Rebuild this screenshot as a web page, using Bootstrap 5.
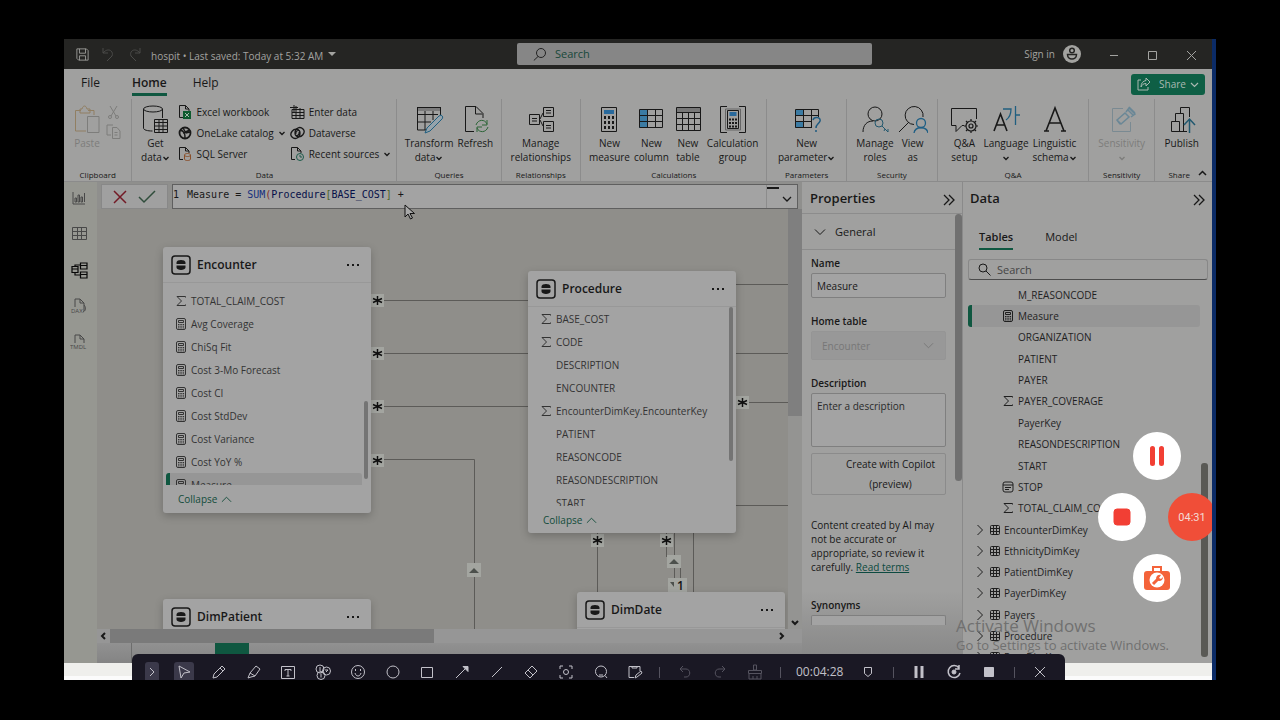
<!DOCTYPE html>
<html lang="en">
<head>
<meta charset="utf-8">
<meta name="viewport" content="width=device-width, initial-scale=1">
<title>hospit - Model view</title>
<link href="https://cdn.jsdelivr.net/npm/bootstrap@5.3.0/dist/css/bootstrap.min.css" rel="stylesheet">
<style>
:root{--ink:#181818;--soft:#333;--panel:#a0a09f;--sheet:#a3a3a3;--line:#858585;--green:#0f5740}
body{background:#000;color:var(--ink);font-family:"Open Sans","Noto Sans",sans-serif;font-size:10px;line-height:14px;height:100vh;padding:39px 64px 40px;overflow:hidden}
svg{flex:none;fill:none;stroke:currentColor;stroke-width:1}
button,input,select,textarea{font:inherit;color:inherit}
.plain{background:none;border:0;padding:0;color:inherit}
.screen{background:var(--panel);border-right:4px solid #0b2b66;overflow:hidden}
.titlebar{height:30px;background:#252523;color:#a3a3a0;flex:none}
.title-search{width:355px;height:22px;left:453px;top:4px;background:#868686;border-radius:2px}
.title-search input,.find input{background:none;border:0;outline:0;font-size:11px;padding:0;min-width:0}
.title-search input::placeholder{color:#17483a;opacity:1}
.find input::placeholder{color:#444;opacity:1}
.window-buttons{gap:28px;padding-right:15px}
.tabs{height:30px;flex:none;padding:0 7px 0 17px;font-size:12px}
.tabs .tab{line-height:20px;height:24px;border-bottom:3px solid transparent}
.tabs .tab.on{font-weight:600;border-color:var(--green);margin:0 26px 0 32px}
.share{background:#0e5f45;color:#aab9b2;width:74px;height:21px;border-radius:3px;font-size:10px}
.ribbon{height:83px;flex:none;border-bottom:1px solid #8b8b8b}
.group{border-right:1px solid #8c8c8c;padding-top:6px;min-width:0}
.group:last-child{border:0}
.group-name{font-size:8px;line-height:12px}
.big{text-align:center;white-space:nowrap;min-width:30px}
.big svg{display:block;margin:0 auto 1px}
.small-cmds{margin-top:-4px}
.small-cmd{height:21px;white-space:nowrap}
.faded{color:#7d7d7b}
.g1{flex:68 1 0}.g2{flex:266 1 0}.g3{flex:104 1 0}.g4{flex:79 1 0}.g5{flex:187 1 0}.g6{flex:79 1 0}.g7{flex:91 1 0}.g8{flex:151 1 0}.g9{flex:66 1 0}.g10{flex:57 1 0}
.rail{width:33px;flex:none;background:#969791;color:#484848;padding:8px 3px 0 0}
.rail button{height:16px;margin-bottom:20px}
.formula{height:27px;padding:2px 4px 0;background:#8f8f8d}
.formula-tools{width:67px;border:1px solid #888;background:#a0a0a0;gap:11px}
.formula-text{border:1px solid #5f5f5f;background:#a3a3a3;font:10px/20px "DejaVu Sans Mono","Liberation Mono",monospace}
.formula-more{width:31px;border-left:1px solid #8c8c8c}
.fn{color:#17307e}.paren{color:#802b2b}.ref{color:#061048}.bracket{color:#4e6527}
.canvas{background:#8f8e8a;overflow:hidden}
.wires{left:0;top:0;color:#5c5b58}
.wires .tag{fill:#a3a5a0;stroke:none}
.wires .ink{stroke:#111;stroke-width:2}
.wires .tri{fill:#4c504c;stroke:none}
.wires text{font-size:12px;font-weight:600;fill:#111;stroke:none}
.node{width:208px;background:var(--sheet);border-radius:3px;box-shadow:0 3px 8px rgba(0,0,0,.22);overflow:hidden}
.node-head{height:36px;border-bottom:1px solid #989898;padding:0 12px 0 8px;font-size:12px;font-weight:600;gap:6px}
.node-encounter{left:66px;top:38px;height:266px}
.node-procedure{left:431px;top:62px;height:262px}
.node-patient{left:66px;top:390px;height:60px}
.node-date{left:480px;top:383px;height:60px}
.fields{margin:0;padding:0;list-style:none;overflow:hidden;color:var(--soft)}
.node .fields li{height:23px;padding-left:12px;display:flex;align-items:center;gap:4px}
.node-encounter .fields{height:196px;margin-top:6px;padding:0 9px 0 0}
.node-procedure .fields{height:199px}
.fields svg,.slot{width:12px;height:12px;flex:none}
.fields .chosen{background:#969696;border-left:4px solid var(--green);border-radius:3px}
.node .fields .chosen{margin-left:3px;padding-left:5px}
.collapse-link{color:#124c3a;margin-left:15px;height:28px}
.thumb{background:#747474;border-radius:2px;width:4px}
.t1{right:3px;top:154px;height:78px}
.t2{right:3px;top:36px;height:154px}
.vbar{width:14px;background:#949492}
.vbar .slab{height:207px;background:#7f7f7f}
.hbar{height:14px;background:#969696;flex:none}
.hbar .slab{flex:0 0 46%;background:#7a7a7a}
.pages{height:20px;flex:none;background:linear-gradient(#919191,#848484)}
.pages .nav-space{width:35px;border-right:1px solid #6d6d6d}
.pages .add{width:34px;height:12px;margin-left:83px;background:#0f5740}
.props{width:161px;flex:none;border-right:1px solid #8a8a8a;background:linear-gradient(#a0a09f 85%,#868686)}
.pane-title{font-size:13px;font-weight:600;line-height:18px;height:31px;padding:7px 6px 0 8px}
.rule{border-top:1px solid #8c8c8c}
.section-toggle{height:36px;font-size:11px;padding-left:12px;gap:9px}
.form-part{margin:0 16px 0 9px;padding-top:6px}
.form-part label{display:block;font-weight:600;line-height:14px;margin:16px 0 3px}
.form-part label:first-child{margin-top:0}
.box{display:block;width:100%;border:1px solid #7f7f7f;border-radius:2px;background:#a3a3a3;padding:0 5px}
.box::placeholder{color:#2a2a2a;opacity:1}
.name-box{height:25px}
.home-box{height:29px;padding-left:10px;appearance:none;background:#989898;border-color:#959595;color:#777;opacity:1}
.home-mark{right:12px;top:9px;color:#777}
.desc-box{height:54px;padding-top:5px;resize:none}
.copilot{height:42px;margin-top:6px;line-height:20px;padding:0 0 0 24px;background:none;border-color:#8b8b8b}
.note{margin:23px 0 0}
.note a{color:#0c4a40}
.form-part .syn-label{margin-top:24px}
.syn-box{height:10px;border-bottom:0;border-radius:2px 2px 0 0}
.props-thumb{right:0;top:32px;width:7px;height:267px;border-radius:4px;background:#707070}
.data{width:249px;flex:none;padding:0 4px 0 5px}
.data .pane-title{padding:7px 2px 0}
.data-tabs{height:20px;font-size:11px;padding-left:11px;gap:32px;margin-top:17px}
.data-tabs button{padding-bottom:4px}
.data-tabs .on{font-weight:600;border-bottom:2px solid var(--green)}
.find{height:21px;border:1px solid #888;border-bottom-color:#4c4c4c;border-radius:3px;margin-top:9px;padding-left:9px;gap:6px}
.tree{display:grid;grid-auto-rows:1fr;color:#1f1f1f;margin:4px 8px 0 0;padding:0;list-style:none}
.tree li{display:flex;align-items:center;gap:4px;padding-left:34px}
.tree .chosen{padding-left:30px}
.tree-fields{height:235px}
.tree-tables{height:149px;margin-top:0}
.tree-tables li{padding-left:6px;gap:3px}
.data-thumb{right:4px;top:281px;width:7px;height:194px;background:#595955;border-radius:3px}
.desk{height:17px;flex:none;background:#efefec;border-bottom:4px solid #fbfbfb}
.watermark{left:892px;top:576px;color:#707070;pointer-events:none;font-size:13px;line-height:17px}
.watermark strong{display:block;font-size:17px;font-weight:400;line-height:22px}
.recorder{left:68px;right:147px;bottom:0;height:26px;background:#1a1824;border-radius:6px 6px 0 0;color:#c2c1c9;overflow:hidden;padding:10px 0 0 13px}
.recorder button{height:20px;width:20px;display:flex;justify-content:center;align-items:center}
.recorder .fold{width:14px}
.recorder .lit{background:#3b394a;border-radius:3px}
.recorder .off{color:#55535f}
.recorder .bar{width:1px;height:11px;background:#55535f}
.tools{width:486px;justify-content:space-around;margin:0 6px 0 8px}
.tail{gap:15px}
.clock{font-size:12px;line-height:20px}
.round{width:48px;height:48px;border-radius:50%;background:#fff;border:0;padding:0;display:flex;align-items:center;justify-content:center;color:#f23f34}
.r1{right:31px;top:393px}.r2{right:66px;top:454px}.r3{right:-4px;top:454px;background:#f04e38;color:#f4dcd6;font:11px Roboto,sans-serif}.r4{right:31px;top:515px;color:#f4633a}
.pointer{left:340px;top:165px}
</style>
</head>
<body>
<svg width="0" height="0" class="position-absolute" aria-hidden="true">
<symbol id="calc" viewBox="0 0 12 12"><rect x="1.5" y=".5" width="9" height="11" rx="1.5"/><path d="M3.5 2.5h5v2h-5zM3 6.5h1.5M5.3 6.5h1.5M7.6 6.5h1.5M3 8.2h1.5M5.3 8.2h1.5M7.6 8.2h1.5M3 9.9h1.5M5.3 9.9h1.5M7.6 9.9h1.5"/></symbol>
<symbol id="sum" viewBox="0 0 12 12"><path d="M10.500 2.500V1.500H2L6.500 6 2 10.500h8.500V9.500"/></symbol>
<symbol id="chev" viewBox="0 0 8 8"><path d="M1.500 3 4 5.500 6.500 3" stroke-width="1.300"/></symbol>
<symbol id="down" viewBox="0 0 12 12"><path d="M1 3.500l5 5 5-5"/></symbol>
<symbol id="up" viewBox="0 0 12 12"><path d="M1 8.500l5-5 5 5"/></symbol>
<symbol id="right" viewBox="0 0 8 12"><path d="M1.500 1l5 5-5 5"/></symbol>
<symbol id="dbl" viewBox="0 0 14 14"><path d="M2 2l5 5-5 5M7 2l5 5-5 5" stroke-width="1.300"/></symbol>
<symbol id="tbl" viewBox="0 0 12 12"><rect x="1.500" y="1.500" width="9" height="9" rx="1"/><path d="M4.500 1v10M7.500 1v10M1 4.500h10M1 7.500h10"/></symbol>
<symbol id="date" viewBox="0 0 12 12"><rect x="1" y="1" width="10" height="10" rx="2"/><path d="M1 4h10M3 6.500h6M3 8.500h4"/></symbol>
<symbol id="db" viewBox="0 0 20 20"><rect x="1" y="1" width="18" height="18" rx="3" stroke-width="1.500"/><path d="M5.500 7.500c0-3.300 9-3.300 9 0v1.500h-9zM5.500 10.500h9v2c0 3.300-9 3.300-9 0z" fill="currentColor" stroke="none"/></symbol>
<symbol id="dots" viewBox="0 0 12 4"><path d="M0 1h2v2H0zM5 1h2v2H5zM10 1h2v2h-2z" fill="currentColor" stroke="none"/></symbol>
<symbol id="glass" viewBox="0 0 14 14"><circle cx="8" cy="6" r="4.500"/><path d="M5 9.500.8 13.500"/></symbol>
<symbol id="doc" viewBox="0 0 14 14"><path d="M5 12.500H1.500V.5h6L11 4v2M7.500.5V4H11"/></symbol>
</svg>

<div class="screen d-flex flex-column h-100 position-relative">
<header class="titlebar d-flex align-items-center position-relative">
 <button class="plain ms-2 ps-1" aria-label="Save"><svg width="13" height="15" viewBox="0 0 15 15"><path d="M1 1h11l2 2v11H3l-2-2zM4 1v5h7V1M4 14V9h7v5"/></svg></button>
 <button class="plain ms-2 ps-1" aria-label="Undo"><svg width="15" height="15" viewBox="0 0 15 15" color="#4b4b49"><path d="M2 1v5h5M2 6c5-6 11-2 9 3l-5 5"/></svg></button>
 <button class="plain ms-2 ps-1" aria-label="Redo"><svg width="15" height="15" viewBox="0 0 15 15" color="#4b4b49"><path d="M12 1v5H7M12 6C7 0 1 4 3 9l5 5"/></svg></button>
 <span class="ms-2 pt-1">hospit • Last saved: Today at 5:32 AM</span>
 <svg class="ms-1" width="10" height="8" viewBox="0 0 10 8"><path d="M1 2h8L5 6z" fill="currentColor" stroke="none"/></svg>
 <label class="title-search position-absolute d-flex align-items-center ps-3 gap-2"><svg width="14" height="14" color="#222"><use href="#glass"/></svg><input placeholder="Search" aria-label="Search"></label>
 <div class="window-buttons ms-auto d-flex align-items-center">
  <div class="d-flex align-items-center gap-2"><a href="#" class="text-reset text-decoration-none">Sign in</a>
  <svg width="18" height="18" viewBox="0 0 18 18"><circle cx="9" cy="9" r="9" fill="currentColor" stroke="none"/><g stroke="#252523" stroke-width="1.500"><circle cx="9" cy="5.500" r="2.300"/><path d="M4.500 9.500h9c0 6-9 6-9 0z"/></g></svg></div>
  <button class="plain" aria-label="Minimize"><svg width="10" height="10"><path d="M1 5.500h8"/></svg></button>
  <button class="plain" aria-label="Maximize"><svg width="11" height="10"><path d="M1.500 1.500h8v8h-8z"/></svg></button>
  <button class="plain" aria-label="Close"><svg width="11" height="11"><path d="M1 1l9 9M10 1l-9 9"/></svg></button>
 </div>
</header>

<nav class="tabs d-flex align-items-center">
 <button class="plain tab">File</button><button class="plain tab on">Home</button><button class="plain tab">Help</button>
 <button class="plain share ms-auto d-flex align-items-center justify-content-center gap-1"><svg width="14" height="14" viewBox="0 0 14 14"><path d="M4 3H1v10h10v-3M9 1l4 4-4 4V6.500C6 6.500 5 8 4 10c0-4 2-6 5-6.500z"/></svg><span class="ms-1">Share</span><svg width="9" height="9" viewBox="0 0 9 9"><path d="M1 3l3.500 3.500L8 3" stroke-width="1.200"/></svg></button>
</nav>

<section class="ribbon d-flex">
 <div class="group g1 d-flex flex-column"><div class="d-flex ps-2 gap-1 faded">
  <button class="plain big"><svg width="26" height="30" viewBox="0 0 26 30"><path d="M12 26H1.500V5.500H7M14 5.500h6V10M6 8V4h2c1-4 4-4 5 0h3v4z" stroke="#917f62"/><path d="M13.500 11.500H25v16H13.500z"/></svg>Paste</button>
  <div class="d-flex flex-column gap-1"><svg width="15" height="15" viewBox="0 0 15 15"><path d="M4 1l6 10M11 1L5 11"/><circle cx="4" cy="12" r="1.500"/><circle cx="11" cy="12" r="1.500"/></svg><svg width="15" height="15" viewBox="0 0 15 15"><path d="M5 11H1V1h6M6.500 3.500H11L14 7v7.500H6.500zM8.500 8.500h3M8.500 11h3"/></svg></div></div>
  <div class="group-name mt-auto text-center">Clipboard</div></div>
 <div class="group g2 d-flex flex-column"><div class="d-flex align-items-start ps-2 gap-1">
  <button class="plain big me-1"><svg width="28" height="30" viewBox="0 0 28 30"><ellipse cx="12" cy="4" rx="9.500" ry="3"/><path d="M2.500 4v19c0 2 4 3 9 3M21.500 4v9"/><path d="M13.500 14.500h13v13h-13zM13.500 17.500h13M18 15v12M22 15v12M14 21h12M14 24.500h12"/></svg>Get<br>data<svg class="d-inline" width="8" height="8"><use href="#chev"/></svg></button>
  <div class="small-cmds d-flex flex-column">
   <button class="plain small-cmd d-flex align-items-center gap-1"><svg width="14" height="14"><use href="#doc"/><path d="M5 6h8v8H5z" fill="#0d5a2e" stroke="none"/><path d="M7 8l4 4M11 8l-4 4" stroke="#a8b8ac"/></svg>Excel workbook</button>
   <button class="plain small-cmd d-flex align-items-center gap-1"><svg width="14" height="14" viewBox="0 0 14 14" stroke-width="1.500"><circle cx="7" cy="7" r="5.500" stroke-width="1.800"/><path d="M2 4c4 1 5 3 5 8M5 7l7-3M5 2l3 5 4-1" stroke-width="1.400"/></svg>OneLake catalog<svg width="8" height="8"><use href="#chev"/></svg></button>
   <button class="plain small-cmd d-flex align-items-center gap-1"><svg width="14" height="14"><use href="#doc"/><path d="M6.500 8v4c0 2 6 2 6 0V8c0-2-6-2-6 0c0 2 6 2 6 0" stroke="#8a4f2a"/></svg>SQL Server</button></div>
  <div class="small-cmds d-flex flex-column">
   <button class="plain small-cmd d-flex align-items-center gap-1"><svg width="15" height="14" viewBox="0 0 15 14"><path d="M2 4.500h12v9H2zM2 7.500h12M2 10.500h12M6 1v12M10 3v10M0 2.500h8M4 0v7"/></svg>Enter data</button>
   <button class="plain small-cmd d-flex align-items-center gap-1"><svg width="15" height="14" viewBox="0 0 15 14"><path d="M9 4C3 1-1 8 2 11s8 1 8-4-5-2-4 1M6 10c6 3 10-4 7-7S5 2 5 7s5 2 4-1" stroke-width="1.300"/></svg>Dataverse</button>
   <button class="plain small-cmd d-flex align-items-center gap-1"><svg width="15" height="14"><use href="#doc" width="14"/><circle cx="10" cy="10" r="3.500" stroke="#1c5a4a"/><path d="M10 8v2h2" stroke="#1c5a4a"/></svg>Recent sources<svg width="8" height="8"><use href="#chev"/></svg></button></div></div>
  <div class="group-name mt-auto text-center">Data</div></div>
 <div class="group g3 d-flex flex-column"><div class="d-flex justify-content-center align-items-start gap-1">
  <button class="plain big"><svg width="30" height="30" viewBox="0 0 30 30"><path d="M3 2.500h24M3.500 2v23H12M26.500 2v8M3 9.500h21M3 17h14M11 3v22M19 3v12"/><path d="M4 3h22v3H4z" fill="#7b7b7b" stroke="none"/><path d="M27 10c2 1 2 3 1 4L16 26l-5 2 2-5 12-12z" stroke="#205f80" fill="#96a3ab"/></svg>Transform<br>data<svg class="d-inline" width="8" height="8"><use href="#chev"/></svg></button>
  <button class="plain big"><svg width="28" height="30" viewBox="0 0 28 30"><path d="M13 26.500H4.500v-25H15l7 7V13M14.500 2v7h7"/><path d="M15 20c2-6 9-6 11-1M26 15v5h-5M27 22c-2 6-9 6-11 1M16 27v-5h5" stroke="#2c6537"/></svg>Refresh</button></div>
  <div class="group-name mt-auto text-center">Queries</div></div>
 <div class="group g4 d-flex flex-column"><div class="d-flex justify-content-center">
  <button class="plain big"><svg width="28" height="30" viewBox="0 0 28 30"><path d="M2.500 9.500h10v10h-10zM16.500 2.500h10v9h-10zM16.500 16.500h10v10h-10zM5 13.500h5M5 16h5M19 5.500h5M19 8h5M19 20.500h5M19 23h5M13 14l3-6M13 15l3 6"/></svg>Manage<br>relationships</button></div>
  <div class="group-name mt-auto text-center">Relationships</div></div>
 <div class="group g5 d-flex flex-column"><div class="d-flex justify-content-center gap-1">
  <button class="plain big"><svg width="24" height="30" viewBox="0 0 24 30"><path d="M4.500 2.500h15v24h-15z"/><path d="M7 5h10v4H7z" fill="#28699c" stroke="none"/><path d="M7 12.500h2M11 12.500h2M15 12.500h2M7 17.500h2M11 17.500h2M15 17.500h2M7 22.500h2M11 22.500h2M15 22.500h2" stroke-width="3"/></svg>New<br>measure</button>
  <button class="plain big"><svg width="28" height="30" viewBox="0 0 28 30"><path d="M2 5h8v18H2z" fill="#3b7ba3" stroke="none"/><path d="M2.500 4.500h23v18h-23zM10.500 5v18M18.500 5v18M3 10.500h22M3 16.500h22"/></svg>New<br>column</button>
  <button class="plain big"><svg width="28" height="30" viewBox="0 0 28 30"><path d="M3 3h23v4H3z" fill="#777" stroke="none"/><path d="M2.500 2.500h24v23h-24zM3 7.500h23M3 13.500h23M3 19.500h23M8.500 7v18M14.500 7v18M20.500 7v18"/></svg>New<br>table</button>
  <button class="plain big"><svg width="28" height="30" viewBox="0 0 28 30"><path d="M8 1.500H1.500v26H8M20 1.500h6.500v26H20M8.500 5.500h11v18h-11z"/><path d="M6.500 4h15v21h-15z" stroke="#666"/><path d="M10.500 7h7v4h-7z" fill="#28699c" stroke="none"/><path d="M10 14.500h8M10 18h8M10 21.500h8" stroke-width="2" stroke-dasharray="2 1"/></svg>Calculation<br>group</button></div>
  <div class="group-name mt-auto text-center">Calculations</div></div>
 <div class="group g6 d-flex flex-column"><div class="d-flex justify-content-center">
  <button class="plain big"><svg width="28" height="30" viewBox="0 0 28 30"><path d="M2 5h8v6H2zM2 17h8v6H2z" fill="#3b7ba3" stroke="none"/><path d="M18 22.500H2.500v-18h23V12M10.500 5v18M18.500 5v18M3 10.500h22M3 16.500h16"/><path d="M20 15c1-4 8-3 7 1-1 3-4 3-4 7M23 25v2" stroke="#1e5a80" stroke-width="1.500"/></svg>New<br>parameter<svg class="d-inline" width="8" height="8"><use href="#chev"/></svg></button></div>
  <div class="group-name mt-auto text-center">Parameters</div></div>
 <div class="group g7 d-flex flex-column"><div class="d-flex justify-content-center gap-1">
  <button class="plain big"><svg width="28" height="30" viewBox="0 0 28 30"><circle cx="14" cy="9" r="7"/><path d="M2 27c0-7 4-11 10-11"/><g stroke="#23586e"><circle cx="18" cy="18" r="4"/><path d="M21 21l6 6v-3M24 24l-1 2"/></g></svg>Manage<br>roles</button>
  <button class="plain big"><svg width="30" height="30" viewBox="0 0 30 30"><path d="M16 19.500A9 9 0 1 1 25 12M11 17L1 27"/><g stroke="#1f5f85" stroke-width="1.300"><circle cx="23" cy="18" r="4.500"/><path d="M16 28c1-7 13-7 14 0"/></g></svg>View<br>as</button></div>
  <div class="group-name mt-auto text-center">Security</div></div>
 <div class="group g8 d-flex flex-column"><div class="d-flex justify-content-center gap-1">
  <button class="plain big"><svg width="28" height="30" viewBox="0 0 28 30"><path d="M14 20.500h-2l-6 6v-6H1.500v-17h25V14"/><g stroke-width="1.200"><circle cx="21" cy="21" r="2"/><circle cx="21" cy="21" r="5"/><path d="M21 14v2M21 26v2M14 21h2M26 21h2M16 16l1.500 1.500M24.500 24.500L26 26M26 16l-1.500 1.500M17.500 24.500L16 26"/></g></svg>Q&amp;A<br>setup</button>
  <button class="plain big"><svg width="28" height="30" viewBox="0 0 28 30"><path d="M2 26L8.500 9 15 26M4 20h9" stroke-width="1.600"/><path d="M11 4h8c0 5-2 9-5 11M23.500 1v19M24 10h4" stroke="#205f80" stroke-width="1.300"/></svg>Language<br><svg class="d-inline" width="8" height="8"><use href="#chev"/></svg></button>
  <button class="plain big"><svg width="28" height="30" viewBox="0 0 28 30"><path d="M5 26L14 3l9 23M8 18h12M3 26h5M20 26h5" stroke-width="1.600"/></svg>Linguistic<br>schema<svg class="d-inline" width="8" height="8"><use href="#chev"/></svg></button></div>
  <div class="group-name mt-auto text-center">Q&amp;A</div></div>
 <div class="group g9 d-flex flex-column"><div class="d-flex justify-content-center faded">
  <button class="plain big"><svg width="28" height="30" viewBox="0 0 28 30"><path d="M15 3.500H4.500v23h18V17" stroke="#7a8a92"/><path d="M9 15l8-7 4 4-8 7zM12 19l-3-4M18 7l3-4 6 6-4 3M20 5l5 5M21 2l6 6" stroke="#6a8796" stroke-width="1.500"/></svg>Sensitivity<br><svg class="d-inline" width="8" height="8"><use href="#chev"/></svg></button></div>
  <div class="group-name mt-auto text-center">Sensitivity</div></div>
 <div class="group g10 d-flex flex-column"><div class="d-flex justify-content-center pe-1">
  <button class="plain big"><svg width="28" height="30" viewBox="0 0 28 30"><path d="M19 26.500H3.500v-10h8v10M7.500 16V8.500h8v18M12.500 8V2.500h9V12"/><path d="M21.500 28V15M16 20l5.500-6 5.500 6" stroke="#20586f" stroke-width="1.500"/></svg>Publish</button></div>
  <div class="group-name mt-auto d-flex justify-content-center gap-2 ps-2">Share<svg width="9" height="9" viewBox="0 0 9 9"><path d="M1 6l3.500-3.500L8 6" stroke-width="1.500"/></svg></div></div>
</section>

<main class="d-flex flex-grow-1 overflow-hidden">
 <nav class="rail d-flex flex-column align-items-center">
  <button class="plain" aria-label="Report view"><svg width="14" height="16" viewBox="0 0 14 16"><path d="M1 2v12h12M3 8h1.500v4H3zM6 5h1.500v7H6zM9 7h1.500v5H9zM12.500 3v9"/></svg></button>
  <button class="plain" aria-label="Table view"><svg width="15" height="16" viewBox="0 0 15 16"><path d="M.5 1.500h14v12H.5zM.5 5.500h14M.5 9.500h14M5.500 2v12M9.500 2v12"/></svg></button>
  <button class="plain" aria-label="Model view"><svg width="17" height="17" viewBox="0 0 17 17" color="#080808"><path d="M1 4.500h6v6H1zM1 7h6M9.500 1h6.500v6H9.500zM9.500 3.500H16M9.500 10H16v6H9.500zM9.500 12.500H16M4 4.500V3h5M4 10.500V13h5" stroke-width="1.200"/></svg></button>
  <button class="plain" aria-label="DAX query view"><svg width="18" height="16" viewBox="0 0 18 16"><path d="M5 9V1h5l4 4v8M10 1v4h4M13 14c3-1 3-5 1-7"/><text x="1" y="15" font-size="6" stroke="none" fill="currentColor">DAX</text></svg></button>
  <button class="plain" aria-label="TMDL view"><svg width="18" height="16" viewBox="0 0 18 16"><path d="M5 9V1h5l4 4v4M10 1v4h4"/><text x="0" y="15" font-size="6" stroke="none" fill="currentColor">TMDL</text></svg></button>
 </nav>

 <section class="d-flex flex-column flex-grow-1 overflow-hidden">
  <div class="formula d-flex gap-1">
   <div class="formula-tools d-flex align-items-center justify-content-center"><button class="plain d-flex" aria-label="Cancel"><svg width="14" height="14" color="#731a26"><path d="M1 1l12 12M13 1L1 13" stroke-width="1.500"/></svg></button><button class="plain d-flex" aria-label="Commit"><svg width="18" height="14" color="#304d3c"><path d="M1 7l5 5L17 1" stroke-width="1.500"/></svg></button></div>
   <div class="formula-text d-flex flex-grow-1"><span class="me-2">1</span><span role="textbox" aria-label="Formula" class="flex-grow-1">Measure = <span class="fn">SUM</span><span class="paren">(</span><span class="ref">Procedure</span><span class="bracket">[</span><span class="ref">BASE_COST</span><span class="bracket">]</span> +</span>
    <button class="plain formula-more d-flex align-items-center" aria-label="Expand"><svg width="30" height="22" viewBox="0 0 30 22"><path d="M0 2h12" stroke-width="2"/><path d="M16 11l4 4 4-4" stroke-width="1.300"/></svg></button></div>
  </div>
  <div class="d-flex flex-grow-1 overflow-hidden">
   <div class="canvas position-relative flex-grow-1">
    <svg class="wires position-absolute" width="100%" height="100%">
     <path d="M274 91.500h160M274 144.500h160M274 197.500h160M274 250.500h103.500V440M639 75.500h400M639 144.500h400M639 193.500h400M639 296.500h400M500.500 324v60M569.500 324v24M577.500 324v60M583.500 348v30M596.500 324v60"/>
     <path class="tag" d="M274 85h13v13h-13zM274 138h13v13h-13zM274 191h13v13h-13zM274 245h13v13h-13zM639 187h13v13h-13zM494 325h13v13h-13zM563 325h13v13h-13zM370 354h14v14h-14zM570 346h14v13h-14zM571 369h19v14h-19z"/>
     <path class="tri" d="M372 364l5-5 5 5zM572 355l5-5 5 5zM573 373h4v5z"/>
     <g class="ink"><path id="star" d="M280.500 87v9M276 89.500l9 4M285 89.500l-9 4" stroke-width="1.500"/><use href="#star" y="53"/><use href="#star" y="106"/><use href="#star" y="160"/><use href="#star" x="365" y="102"/><use href="#star" x="220" y="240"/><use href="#star" x="289" y="240"/></g>
     <text x="580" y="381">1</text>
    </svg>
    <article class="node node-encounter position-absolute">
     <div class="node-head d-flex align-items-center"><svg width="20" height="20"><use href="#db"/></svg><span class="me-auto">Encounter</span><svg width="12" height="4"><use href="#dots"/></svg></div>
     <ul class="fields"><li><svg><use href="#sum"/></svg>TOTAL_CLAIM_COST</li><li><svg><use href="#calc"/></svg>Avg Coverage</li><li><svg><use href="#calc"/></svg>ChiSq Fit</li><li><svg><use href="#calc"/></svg>Cost 3-Mo Forecast</li><li><svg><use href="#calc"/></svg>Cost CI</li><li><svg><use href="#calc"/></svg>Cost StdDev</li><li><svg><use href="#calc"/></svg>Cost Variance</li><li><svg><use href="#calc"/></svg>Cost YoY %</li><li class="chosen"><svg><use href="#calc"/></svg>Measure</li></ul>
     <button class="plain collapse-link d-flex align-items-center gap-1">Collapse <svg width="11" height="11"><use href="#up"/></svg></button>
     <i class="thumb t1 position-absolute"></i>
    </article>
    <article class="node node-procedure position-absolute">
     <div class="node-head d-flex align-items-center"><svg width="20" height="20"><use href="#db"/></svg><span class="me-auto">Procedure</span><svg width="12" height="4"><use href="#dots"/></svg></div>
     <ul class="fields"><li><svg><use href="#sum"/></svg>BASE_COST</li><li><svg><use href="#sum"/></svg>CODE</li><li><i class="slot"></i>DESCRIPTION</li><li><i class="slot"></i>ENCOUNTER</li><li><svg><use href="#sum"/></svg>EncounterDimKey.EncounterKey</li><li><i class="slot"></i>PATIENT</li><li><i class="slot"></i>REASONCODE</li><li><i class="slot"></i>REASONDESCRIPTION</li><li><i class="slot"></i>START</li></ul>
     <button class="plain collapse-link d-flex align-items-center gap-1">Collapse <svg width="11" height="11"><use href="#up"/></svg></button>
     <i class="thumb t2 position-absolute"></i>
    </article>
    <article class="node node-patient position-absolute"><div class="node-head d-flex align-items-center"><svg width="20" height="20"><use href="#db"/></svg><span class="me-auto">DimPatient</span><svg width="12" height="4"><use href="#dots"/></svg></div></article>
    <article class="node node-date position-absolute"><div class="node-head d-flex align-items-center"><svg width="20" height="20"><use href="#db"/></svg><span class="me-auto">DimDate</span><svg width="12" height="4"><use href="#dots"/></svg></div></article>
   </div>
   <div class="vbar d-flex flex-column justify-content-between"><div class="slab"></div><svg class="mx-auto" width="8" height="12"><path d="M1 4l3 3 3-3" stroke-width="2"/></svg></div>
  </div>
  <div class="hbar d-flex align-items-stretch"><svg width="13" height="14"><path d="M8 4L5 7l3 3" stroke-width="2"/></svg><div class="slab"></div><svg class="ms-auto me-3" width="8" height="14"><path d="M2 4l3 3-3 3" stroke-width="2"/></svg></div>
  <div class="pages d-flex"><div class="nav-space"></div><div class="add"></div></div>
 </section>

 <aside class="props position-relative overflow-hidden">
  <div class="pane-title d-flex justify-content-between">Properties<button class="plain d-flex" aria-label="Collapse properties"><svg width="14" height="14" class="mt-1"><use href="#dbl"/></svg></button></div>
  <button class="plain rule section-toggle w-100 d-flex align-items-center"><svg width="12" height="12"><use href="#down"/></svg>General</button>
  <div class="rule"></div>
  <div class="form-part">
   <label for="pname">Name</label><input id="pname" class="box name-box" value="Measure">
   <label for="ptable">Home table</label>
   <div class="position-relative"><select id="ptable" class="box home-box" disabled><option>Encounter</option></select><svg class="home-mark position-absolute" width="11" height="11"><use href="#down"/></svg></div>
   <label for="pdesc">Description</label><textarea id="pdesc" class="box desc-box" placeholder="Enter a description"></textarea>
   <button class="box copilot">Create with Copilot<br>(preview)</button>
   <p class="note">Content created by AI may not be accurate or appropriate, so review it carefully. <a href="#">Read terms</a></p>
   <label class="syn-label" for="psyn">Synonyms</label><input id="psyn" class="box syn-box">
  </div>
  <i class="props-thumb position-absolute"></i>
 </aside>

 <aside class="data position-relative overflow-hidden">
  <div class="pane-title d-flex justify-content-between">Data<button class="plain d-flex" aria-label="Collapse data"><svg width="14" height="14" class="mt-1"><use href="#dbl"/></svg></button></div>
  <div class="data-tabs d-flex align-items-start"><button class="plain on">Tables</button><button class="plain">Model</button></div>
  <label class="find d-flex align-items-center"><svg width="13" height="13" viewBox="0 0 13 13"><circle cx="5" cy="5" r="4"/><path d="M8 8l4.500 4.500"/></svg><input placeholder="Search" aria-label="Search fields"></label>
  <ul class="tree fields tree-fields"><li><i class="slot"></i>M_REASONCODE</li><li class="chosen"><svg><use href="#calc"/></svg>Measure</li><li><i class="slot"></i>ORGANIZATION</li><li><i class="slot"></i>PATIENT</li><li><i class="slot"></i>PAYER</li><li><svg><use href="#sum"/></svg>PAYER_COVERAGE</li><li><i class="slot"></i>PayerKey</li><li><i class="slot"></i>REASONDESCRIPTION</li><li><i class="slot"></i>START</li><li><svg><use href="#date"/></svg>STOP</li><li><svg><use href="#sum"/></svg>TOTAL_CLAIM_COST</li></ul>
  <ul class="tree fields tree-tables"><li><svg><use href="#right"/></svg><svg><use href="#tbl"/></svg>EncounterDimKey</li><li><svg><use href="#right"/></svg><svg><use href="#tbl"/></svg>EthnicityDimKey</li><li><svg><use href="#right"/></svg><svg><use href="#tbl"/></svg>PatientDimKey</li><li><svg><use href="#right"/></svg><svg><use href="#tbl"/></svg>PayerDimKey</li><li><svg><use href="#right"/></svg><svg><use href="#tbl"/></svg>Payers</li><li><svg><use href="#right"/></svg><svg><use href="#tbl"/></svg>Procedure</li><li><svg><use href="#right"/></svg><svg><use href="#tbl"/></svg>RaceDimKey</li></ul>
  <i class="data-thumb position-absolute"></i>
 </aside>
</main>
<div class="desk"></div>

<div class="watermark position-absolute"><strong>Activate Windows</strong>Go to Settings to activate Windows.</div>
<div class="recorder position-absolute d-flex align-items-center" role="toolbar" aria-label="Recorder">
 <button class="plain lit fold" aria-label="Fold"><svg width="8" height="10"><path d="M2 1l4 4-4 4"/></svg></button>
 <div class="tools d-flex">
  <button class="plain lit" aria-label="Select"><svg width="14" height="14"><path d="M2 1l11 6-6 1-3 5z"/></svg></button>
  <button class="plain" aria-label="Pen"><svg width="16" height="16"><path d="M2 14l1-4 8-8 3 3-8 8zM9 4l3 3"/></svg></button>
  <button class="plain" aria-label="Highlighter"><svg width="16" height="16"><path d="M2 14l2-5 6-7 4 3-5 7-4 1zM4 9l5 3"/></svg></button>
  <button class="plain" aria-label="Text"><svg width="16" height="16"><path d="M1.500 2.500h13v12h-13zM5 7V5.500h6V7M8 6v6M6.500 12h3"/></svg></button>
  <button class="plain" aria-label="Counter"><svg width="16" height="16"><circle cx="5" cy="5" r="4"/><circle cx="11.500" cy="7" r="4"/><circle cx="6" cy="11.500" r="4"/><path d="M5 3v4M6 9.500v4M10 6h3l-2 2"/></svg></button>
  <button class="plain" aria-label="Emoji"><svg width="16" height="16"><circle cx="8" cy="8" r="6.500"/><path d="M5 9c1 4 5 4 6 0M5.500 5v2M10.500 5v2"/></svg></button>
  <button class="plain" aria-label="Ellipse"><svg width="16" height="16"><circle cx="8" cy="8" r="6"/></svg></button>
  <button class="plain" aria-label="Rectangle"><svg width="16" height="16"><path d="M2.500 3.500h11v10h-11z"/></svg></button>
  <button class="plain" aria-label="Arrow"><svg width="16" height="16"><path d="M2 14L12 4M9 2.500h5v5z" fill="currentColor"/></svg></button>
  <button class="plain" aria-label="Line"><svg width="16" height="16"><path d="M3 13L13 3"/></svg></button>
  <button class="plain" aria-label="Eraser"><svg width="16" height="16"><path d="M2 9l7-7 5 5-7 7zM5 6l5 5"/></svg></button>
  <button class="plain" aria-label="Focus"><svg width="16" height="16"><circle cx="8" cy="8" r="2.500"/><path d="M2 5V2h3M11 2h3v3M14 11v3h-3M5 14H2v-3"/></svg></button>
  <button class="plain" aria-label="Zoom"><svg width="16" height="16"><circle cx="8" cy="7.500" r="5.500"/><path d="M12 11.500l2 2.500M6 11h4"/></svg></button>
  <button class="plain" aria-label="Notes"><svg width="16" height="16"><path d="M7 13.500H2v-11h11V7M5 2v2h5V2M8 14l1-3 5-4 1 2-5 4z"/></svg></button>
 </div>
 <div class="tail d-flex align-items-center">
 <span class="bar"></span>
 <button class="plain off" aria-label="Undo drawing"><svg width="14" height="14"><path d="M5 1L2 4l3 3M2 4h6c5 0 5 8 0 8H6"/></svg></button>
 <button class="plain off" aria-label="Redo drawing"><svg width="14" height="14"><path d="M9 1l3 3-3 3M12 4H6c-5 0-5 8 0 8h2"/></svg></button>
 <button class="plain off" aria-label="Clear"><svg width="16" height="16"><path d="M6.500 1h3v5h-3zM1.500 6.500h13v3h-13zM2 10v5h12v-5M6 15v-3M10 15v-3"/></svg></button>
 <span class="bar"></span>
 <span class="clock">00:04:28</span>
 <button class="plain" aria-label="Marker"><svg width="10" height="12"><path d="M1.500 1.500h7v6L5 10.500l-3.500-3z"/></svg></button>
 <span class="bar"></span>
 <button class="plain" aria-label="Pause"><svg width="12" height="14"><path d="M3 1v12M9 1v12" stroke-width="3"/></svg></button>
 <button class="plain" aria-label="Restart"><svg width="16" height="16"><path d="M13 4A6 6 0 1 0 14 9M13 1v4H9" stroke-width="1.500"/><circle cx="8" cy="8" r="2" fill="currentColor"/></svg></button>
 <button class="plain" aria-label="Stop"><svg width="12" height="12"><path d="M1.500 1.500h9v9h-9z" fill="currentColor"/></svg></button>
 <span class="bar"></span>
 <button class="plain" aria-label="Close recorder"><svg width="12" height="12"><path d="M1 1l10 10M11 1L1 11"/></svg></button>
 </div>
</div>
<button class="round r1 position-absolute" aria-label="Pause recording"><svg width="20" height="20"><path d="M5.500 2.500v15M14.500 2.500v15" stroke-width="5" stroke-linecap="round"/></svg></button>
<button class="round r2 position-absolute" aria-label="Stop recording"><svg width="18" height="18"><rect x="1" y="1" width="16" height="16" rx="3" fill="currentColor"/></svg></button>
<button class="round r3 position-absolute">04:31</button>
<button class="round r4 position-absolute" aria-label="Tools"><svg width="28" height="28"><path d="M10 8V3h8v5" stroke-width="2"/><rect x="1" y="7" width="26" height="19" rx="3" fill="currentColor" stroke="none"/><circle cx="14" cy="16" r="7.500" fill="#fff" stroke="none"/><path d="M10 20l5-5" stroke-width="3"/><path d="M18 11l-2 3 2 1 2-2c0 4-4 5-6 3s0-6 4-5z" fill="currentColor" stroke="none"/></svg></button>
<svg class="pointer position-absolute" width="12" height="17" viewBox="0 0 12 17"><path d="M1 1v12l3-3 2.500 5 2-1L6 9.500h4.500z" fill="#a8a8a8" stroke="#111"/></svg>
</div>
<script src="https://cdn.jsdelivr.net/npm/bootstrap@5.3.0/dist/js/bootstrap.bundle.min.js"></script>
</body>
</html>
